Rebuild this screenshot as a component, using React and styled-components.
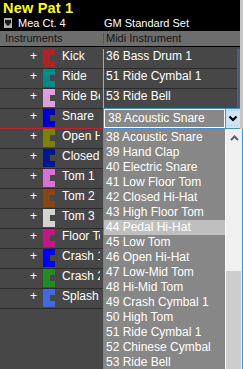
import React from 'react';
import styled, { createGlobalStyle } from 'styled-components';

const GlobalStyle = createGlobalStyle`
  html, body {
    margin: 0;
    padding: 0;
    background: #474747;
  }
  body {
    font-family: 'Liberation Sans', Arial, sans-serif;
  }
`;

// rows below the open combo are hidden by the list, so they carry no midi text
const instruments = [
  { name: 'Kick', color: '#b22222', midi: '36 Bass Drum 1' },
  { name: 'Ride', color: '#008b8b', midi: '51 Ride Cymbal 1' },
  { name: 'Ride Bell', color: '#dda0dd', midi: '53 Ride Bell' },
  { name: 'Snare', color: '#0000cd', midi: '38 Acoustic Snare', editing: true },
  { name: 'Open Hi-Hat', color: '#808000' },
  { name: 'Closed Hi-Hat', color: '#00188f' },
  { name: 'Tom 1', color: '#da70d6' },
  { name: 'Tom 2', color: '#8b4513' },
  { name: 'Tom 3', color: '#d3d3d3' },
  { name: 'Floor Tom', color: '#c71585' },
  { name: 'Crash 1', color: '#0000ff' },
  { name: 'Crash 2', color: '#228b22' },
  { name: 'Splash', color: '#4169e1' },
];

const drumMap = [
  '38 Acoustic Snare',
  '39 Hand Clap',
  '40 Electric Snare',
  '41 Low Floor Tom',
  '42 Closed Hi-Hat',
  '43 High Floor Tom',
  '44 Pedal Hi-Hat',
  '45 Low Tom',
  '46 Open Hi-Hat',
  '47 Low-Mid Tom',
  '48 Hi-Mid Tom',
  '49 Crash Cymbal 1',
  '50 High Tom',
  '51 Ride Cymbal 1',
  '52 Chinese Cymbal',
  '53 Ride Bell',
];

const Frame = styled.div`
  position: relative;
  display: flex;
  width: 243px;
  height: 369px;
  overflow: hidden;
  background: #474747;
`;

const Main = styled.div`
  width: 240px;
  display: flex;
  flex-direction: column;
`;

const EdgeStrip = styled.div`
  width: 3px;
  background: #c6c6c6;
`;

const TitleBlock = styled.div`
  height: 31px;
  background: #000;
`;

const Title = styled.div`
  height: 16px;
  padding-left: 3px;
  color: #ffff00;
  font-size: 14.5px;
  font-weight: bold;
  line-height: 16px;
  letter-spacing: 0.2px;
`;

const InfoLine = styled.div`
  display: flex;
  height: 15px;
  color: #fff;
  font-size: 11px;
  line-height: 15px;
`;

const InfoLeft = styled.div`
  display: flex;
  align-items: flex-start;
  width: 103px;
  padding-left: 4px;
  box-sizing: border-box;
`;

const MenuIcon = styled.svg`
  display: block;
  margin: 2px 6px 0 0;
`;

const InfoRight = styled.div`
  padding-left: 1px;
`;

const Header = styled.div`
  display: flex;
  height: 15px;
  background: #6d6d6d;
  border-bottom: 1px solid #000;
  color: #151515;
  font-size: 11px;
  line-height: 15px;
`;

const HeaderCell = styled.div`
  width: ${({ $width }) => ($width ? `${$width}px` : 'auto')};
  padding-left: ${({ $pad }) => $pad}px;
  box-sizing: border-box;
`;

const HeaderDivider = styled.div`
  width: 1px;
  height: 11px;
  margin-top: 2px;
  background: #c0242c;
`;

const Rows = styled.div`
  flex: 1;
  padding-top: 2px;
`;

const Row = styled.div`
  display: flex;
  height: 20px;
`;

const NameCell = styled.div`
  display: flex;
  align-items: flex-start;
  width: 103px;
  padding-left: 30px;
  box-sizing: border-box;
  border-bottom: 1px solid ${({ $marked }) => ($marked ? '#c8202a' : '#2c2c2c')};
  color: #fff;
  font-size: 12px;
  line-height: 15px;
`;

const Plus = styled.span`
  width: 7px;
  text-align: center;
`;

const Swatch = styled.svg`
  display: block;
  margin-left: 6px;
`;

const Name = styled.span`
  width: 38px;
  margin-left: 7px;
  overflow: hidden;
  white-space: nowrap;
`;

const Divider = styled.div`
  width: 1px;
  background: #86b2de;
`;

const MidiCell = styled.div`
  width: 133px;
  padding-left: 2px;
  box-sizing: border-box;
  border-bottom: 1px solid #2c2c2c;
  color: #fff;
  font-size: 12px;
  line-height: 15px;
  white-space: nowrap;
  overflow: hidden;
`;

const SideBar = styled.div`
  width: 3px;
  background: #4e5d7b;
`;

const Combo = styled.div`
  display: flex;
  width: 137px;
  height: 21px;
  margin-top: -1px;
  box-sizing: border-box;
  border: 1px solid #3f8fe0;
  border-right: none;
`;

const ComboField = styled.div`
  width: 121px;
  padding: 1px 0 0 3px;
  box-sizing: border-box;
  border: 1px solid #fff;
  background: #888;
  color: #fff;
  font-size: 12px;
  line-height: 15px;
  white-space: nowrap;
`;

const ComboButton = styled.div`
  display: flex;
  align-items: center;
  justify-content: center;
  width: 15px;
  border-left: 1px solid #3f8fe0;
  box-sizing: border-box;
  background: #cde4f7;
`;

const DropList = styled.div`
  position: absolute;
  top: 129px;
  left: 103px;
  display: flex;
  width: 140px;
  height: 240px;
  box-sizing: border-box;
  border-left: 1px solid #3f8fe0;
  border-right: 1px solid #3f8fe0;
  background: #fff;
`;

const ListItems = styled.div`
  width: 121px;
  padding-top: 1px;
  background: #878787;
`;

const ListItem = styled.div`
  height: 15px;
  padding-left: 2px;
  background: ${({ $active }) => ($active ? '#bfbfbf' : 'transparent')};
  color: #fff;
  font-size: 12px;
  line-height: 15px;
  white-space: nowrap;
`;

const ScrollBar = styled.div`
  display: flex;
  flex-direction: column;
  width: 16px;
  margin-left: 1px;
  background: #f0f0f0;
`;

const ScrollArrow = styled.div`
  display: flex;
  align-items: center;
  justify-content: center;
  height: 21px;
`;

const ScrollThumb = styled.div`
  height: 110px;
  margin: 123px 1px 0 0;
  background: #cdcdcd;
`;

const ChevronDown = () => (
  <svg width="14" height="19" viewBox="0 0 14 19">
    {[1, 4, 7, 10].map((x) => (
      <rect key={`t${x}`} x={x + 1} y="1" width="1" height="1" fill="#9fc4e6" />
    ))}
    {[2, 5, 8, 11].map((x) => (
      <rect key={`b${x}`} x={x} y="16" width="1" height="1" fill="#9fc4e6" />
    ))}
    <path d="M3.5 7.5 L7 11 L10.5 7.5" fill="none" stroke="#000" strokeWidth="2.2" />
  </svg>
);

const ChevronUp = () => (
  <svg width="9" height="6" viewBox="0 0 9 6">
    <path d="M1 5 L4.5 1.5 L8 5" fill="none" stroke="#606060" strokeWidth="2" />
  </svg>
);

const InstrumentRow = ({ name, color, midi, editing }) => (
  <Row>
    <NameCell $marked={editing}>
      <Plus>+</Plus>
      <Swatch width="12" height="18" viewBox="0 0 12 18">
        <path d="M0 0 H12 V6 H7 V12 H12 V18 H0 Z" fill={color} />
      </Swatch>
      <Name>{name}</Name>
    </NameCell>
    {editing ? (
      <Combo>
        <ComboField>{midi}</ComboField>
        <ComboButton>
          <ChevronDown />
        </ComboButton>
      </Combo>
    ) : (
      <>
        <Divider />
        <MidiCell>{midi}</MidiCell>
        <SideBar />
      </>
    )}
  </Row>
);

const App = () => (
  <>
    <GlobalStyle />
    <Frame>
      <Main>
        <TitleBlock>
          <Title>New Pat 1</Title>
          <InfoLine>
            <InfoLeft>
              <MenuIcon width="8" height="10" viewBox="0 0 8 10">
                <rect width="8" height="10" fill="#b0b0b0" />
                <path d="M1 2 H7 V4.5 L5 7.5 H3 L1 4.5 Z" fill="#1a1a1a" />
              </MenuIcon>
              Mea Ct. 4
            </InfoLeft>
            <InfoRight>GM Standard Set</InfoRight>
          </InfoLine>
        </TitleBlock>
        <Header>
          <HeaderCell $width={103} $pad={5}>Instruments</HeaderCell>
          <HeaderDivider />
          <HeaderCell $pad={2}>Midi Instrument</HeaderCell>
        </Header>
        <Rows>
          {instruments.map((item) => (
            <InstrumentRow key={item.name} {...item} />
          ))}
        </Rows>
      </Main>
      <EdgeStrip />
      <DropList>
        <ListItems>
          {drumMap.map((entry) => (
            <ListItem key={entry} $active={entry === '44 Pedal Hi-Hat'}>
              {entry}
            </ListItem>
          ))}
        </ListItems>
        <ScrollBar>
          <ScrollArrow>
            <ChevronUp />
          </ScrollArrow>
          <ScrollThumb />
        </ScrollBar>
      </DropList>
    </Frame>
  </>
);

export default App;
